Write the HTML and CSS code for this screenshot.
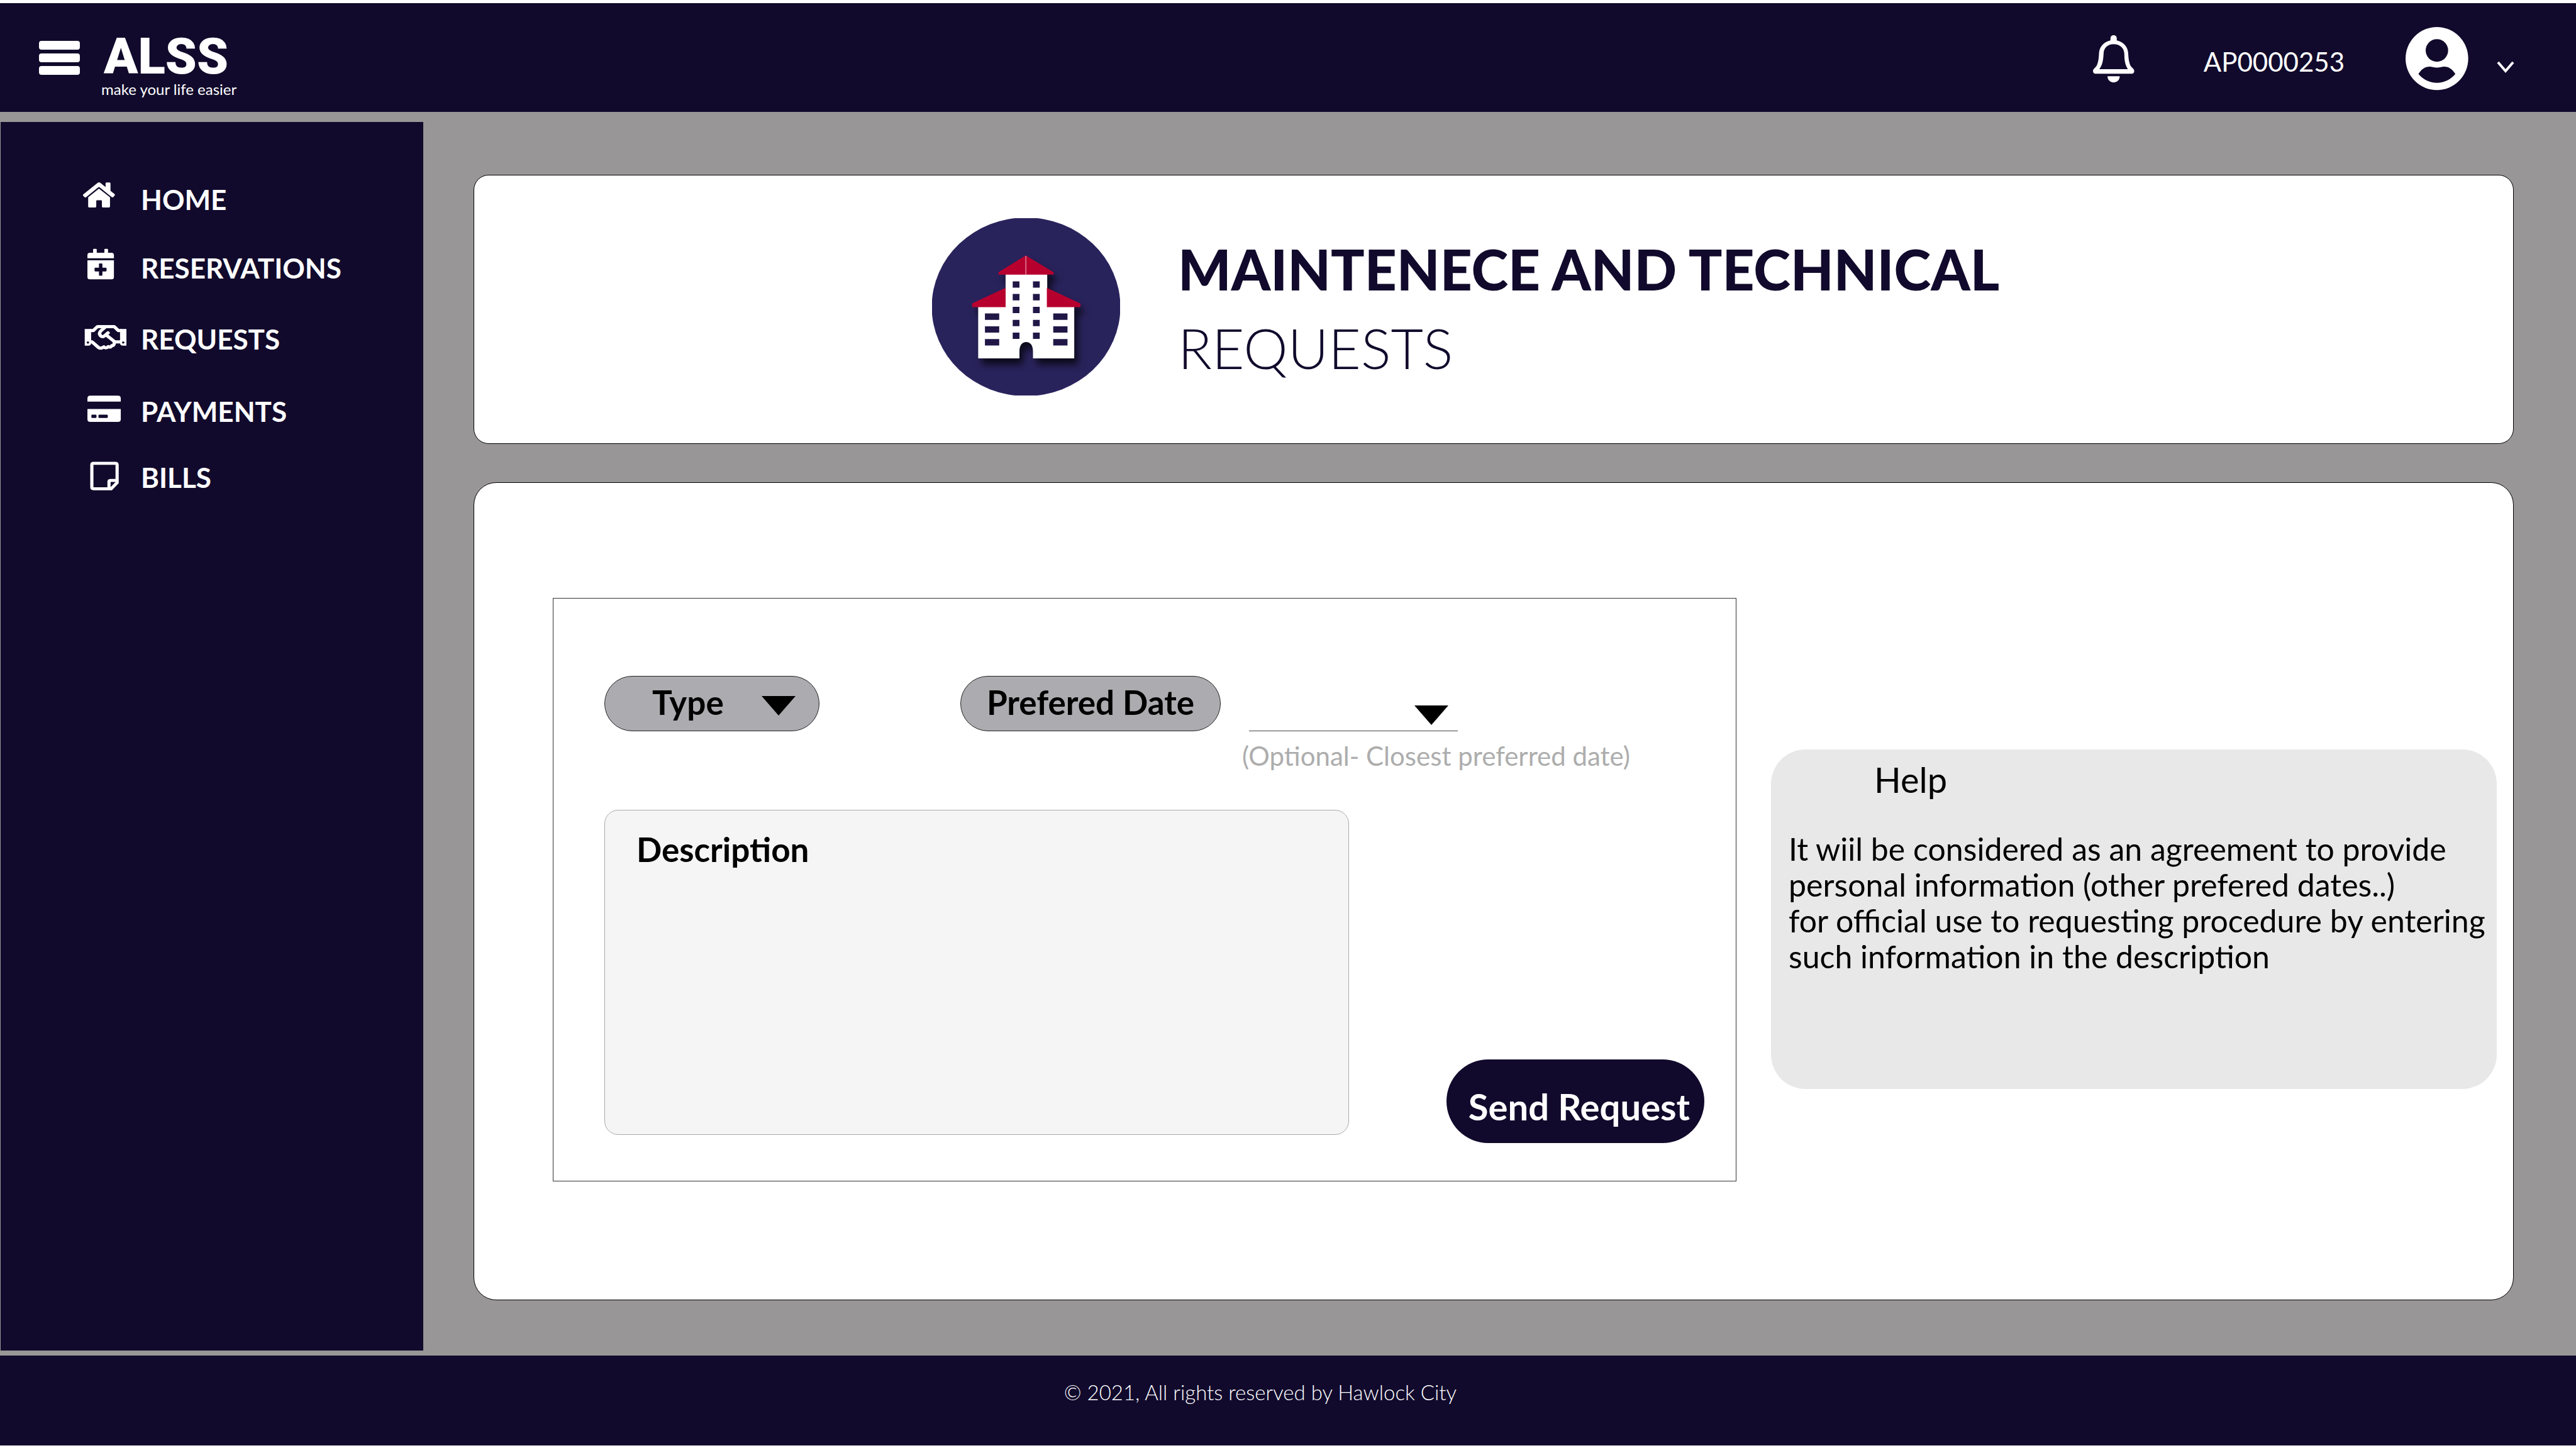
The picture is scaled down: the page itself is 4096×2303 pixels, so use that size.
FILE: index.html
```html
<!DOCTYPE html>
<html lang="en">
<head>
<meta charset="utf-8">
<meta name="viewport" content="width=device-width, initial-scale=1">
<title>ALSS - Maintenance and technical requests</title>
<link rel="stylesheet" href="styles.css">
</head>
<body>
<header class="topbar">
  <button class="icon-button" type="button" aria-label="Menu">
    <svg width="65" height="54" viewBox="0 0 65 54" fill="#fff"><rect width="65" height="14" rx="4"/><rect y="20" width="65" height="14" rx="4"/><rect y="40" width="65" height="14" rx="4"/></svg>
  </button>
  <a class="brand" href="#">
    <span class="brand-name">ALSS</span>
    <span class="brand-tagline">make your life easier</span>
  </a>
  <div class="account">
    <button class="icon-button bell" type="button" aria-label="Notifications">
      <svg width="66" height="76" viewBox="0 0 66 76"><g transform="scale(.5245 .2398) translate(-104 -236)" fill="#fff"><path fill-rule="evenodd" d="M157 270V255C157 243 161 236 166.500 236C172 236 176 243 176 255V270C198 282 211 315 211 365C212 410 216 437 222 450C226 458 229 464 229 474C229 484 226 491 223 491H110C107 491 104 484 104 474C104 464 107 458 111 450C117 437 121 410 122 365C122 315 135 282 157 270ZM123 461H210C203 440 199 410 199 362C199 320 185 295 166.500 295C148 295 136 320 136 362C135 410 131 440 123 461Z"/><path d="M148 508H185C185 532 177 549 166.500 549C156 549 148 532 148 508Z"/></g></svg>
    </button>
    <span class="account-id">AP0000253</span>
    <button class="icon-button profile" type="button" aria-label="Account menu">
      <svg width="100" height="101" viewBox="0 0 100 101"><g transform="scale(.5245 .2398) translate(-1053 -178)"><ellipse cx="1148" cy="387" rx="95" ry="209" fill="#fff"/><g class="cutout"><ellipse cx="1148" cy="333" rx="34" ry="75"/><path d="M1092 490C1100 460 1112 441 1125 441C1134 441 1138 447 1148 447C1158 447 1162 441 1171 441C1184 441 1196 460 1204 490C1190 526 1170 548 1148 548C1126 548 1106 526 1092 490Z"/></g></g></svg>
      <svg class="chevron" width="28" height="19" viewBox="0 0 28 19" fill="none" stroke="#fff" stroke-width="4"><path d="M2 2L14 16L26 2"/></svg>
    </button>
  </div>
</header>

<div class="workspace">
  <nav class="sidebar" aria-label="Main">
    <ul class="menu">
      <li><a href="#"><svg width="70" height="60" viewBox="0 0 70 60"><g transform="scale(.39 .358) translate(-154 -99)" fill="#fff"><path d="M154 162L213 110Q219 105 225 110L246 128V112Q246 108 250 108H262Q266 108 266 112V145L283 160Q285 163 283 166L278 172Q275 176 271 173L222 130Q219 127 216 130L167 173Q163 176 160 173L154 166Z"/><path d="M175 174L219 135L264 174V215Q264 219 260 219H235Q231 219 231 215V190Q231 187 228 187H211Q208 187 208 190V215Q208 219 204 219H179Q175 219 175 215Z"/></g></svg>HOME</a></li>
      <li><a href="#"><svg width="70" height="60" viewBox="0 0 70 60"><g transform="scale(.39 .358) translate(-154 -403)" fill="#fff"><path d="M172 444V430Q172 420 182 420H195V406Q195 402 199 402H206Q210 402 210 406V420H241V406Q241 402 245 402H252Q256 402 256 406V420H270Q280 420 280 430V444Z"/><path fill-rule="evenodd" d="M172 453H280V528Q280 538 270 538H182Q172 538 172 528ZM222 467Q219 467 219 471V486H204Q201 486 201 490V499Q201 503 204 503H219V518Q219 522 222 522H230Q233 522 233 518V503H247Q250 503 250 499V490Q250 486 247 486H233V471Q233 467 230 467Z"/></g></svg>RESERVATIONS</a></li>
      <li><a href="#"><svg width="70" height="60" viewBox="0 0 70 60"><g transform="scale(.39 .358) translate(-154 -718)"><path fill="#fff" fill-rule="evenodd" d="M161 758H187V820Q187 832 175 832H161ZM174 813A5 5 0 1 0 174 823A5 5 0 1 0 174 813ZM331 758H305V820Q305 832 317 832H331ZM318 813A5 5 0 1 0 318 823A5 5 0 1 0 318 813Z"/><g fill="none" stroke="#fff" stroke-width="14" stroke-linejoin="round"><path d="M180 765H196L213 747H281L298 765H312"/><path d="M183 815H191L217 840Q227 847 239 837Q246 847 257 836Q268 842 271 832Q282 833 282 815H310"/><path stroke-linecap="round" d="M246 748L226 767Q218 777 224 786Q233 797 242 788L256 775"/><path d="M247 783L285 816"/></g></g></svg>REQUESTS</a></li>
      <li><a href="#"><svg width="70" height="60" viewBox="0 0 70 60"><g transform="scale(.39 .358) translate(-154 -1040)" fill="#fff"><path d="M172 1081V1067Q172 1055 184 1055H296Q308 1055 308 1067V1081Z"/><path fill-rule="evenodd" d="M172 1114H308V1160Q308 1171 297 1171H183Q172 1171 172 1160ZM192 1139Q188 1139 188 1143V1150Q188 1154 192 1154H205Q209 1154 209 1150V1143Q209 1139 205 1139ZM221 1139Q217 1139 217 1143V1150Q217 1154 221 1154H251Q255 1154 255 1150V1143Q255 1139 251 1139Z"/></g></svg>PAYMENTS</a></li>
      <li><a href="#"><svg width="70" height="60" viewBox="0 0 70 60"><g transform="scale(.39 .358) translate(-154 -1333)" fill="none" stroke="#fff" stroke-width="13"><path d="M190 1362Q190 1355 197 1355H286Q293 1355 293 1362V1441L269 1468H197Q190 1468 190 1461Z"/><path d="M260 1466V1437Q260 1431 266 1431H293"/></g></svg>BILLS</a></li>
    </ul>
  </nav>

  <main class="content">
    <section class="card title-card">
      <svg class="emblem" width="299" height="282" viewBox="0 0 299 282">
        <ellipse cx="149.500" cy="141" rx="150" ry="142" fill="#29235c"/>
        <g class="building"><g transform="scale(.5966 .2398) translate(-72 -126)">
          <path fill="#fff" d="M268 498H379V714H451V1056H341V1010C341 970 334 948 323 948C312 948 305 970 305 1010V1056H195V714H268Z"/>
          <path fill="#b8002f" d="M322 373L396 485V500H249V485ZM268 588V716H180Q177 700 180 690ZM378 588V716H466Q470 700 466 690Z"/>
          <path stroke="#e9a3b4" stroke-width="2" d="M322 376V500"/>
          <path fill="#211747" d="M287 545h18v42h-18zM341 545h18v42h-18zM287 629h18v42h-18zM341 629h18v42h-18zM287 714h18v42h-18zM341 714h18v42h-18zM287 800h18v42h-18zM341 800h18v42h-18zM287 885h18v42h-18zM341 885h18v42h-18zM213 758h38v42h-38zM395 758h38v42h-38zM213 843h38v42h-38zM395 843h38v42h-38zM213 928h38v42h-38zM395 928h38v42h-38z"/>
        </g></g>
      </svg>
      <h1 class="page-title"><strong>MAINTENECE AND TECHNICAL</strong> <span>REQUESTS</span></h1>
    </section>

    <section class="card request-card">
      <form class="request-form">
        <div class="fields">
          <div class="picker type-picker">
            <select class="pill" aria-label="Type"><option>Type</option></select>
            <svg class="arrow" width="54" height="31" viewBox="0 0 54 31"><path d="M0 0H54L27 31Z"/></svg>
          </div>
          <label class="pill date-label" for="date">Prefered Date</label>
          <div class="date-field">
            <div class="picker date-picker">
              <select id="date" aria-describedby="date-hint"><option></option></select>
              <svg class="arrow" width="54" height="31" viewBox="0 0 54 31"><path d="M0 0H54L27 31Z"/></svg>
            </div>
            <p class="hint" id="date-hint">(Optional- Closest preferred date)</p>
          </div>
        </div>
        <div class="message">
          <textarea class="description" aria-label="Description" placeholder="Description"></textarea>
          <button class="send" type="submit">Send Request</button>
        </div>
      </form>
      <aside class="help">
        <h2>Help</h2>
        <p>It wiil be considered as an agreement to provide<br>personal information (other prefered dates..)<br>for official use to requesting procedure by entering<br>such information in the description</p>
      </aside>
    </section>
  </main>
</div>

<footer class="footer">© 2021, All rights reserved by Hawlock City</footer>
</body>
</html>
```
FILE: styles.css
```css
:root {
  --navy: #110a2c;
  --grey: #989696;
}

* {
  box-sizing: border-box;
}

body {
  margin: 0;
  padding: 5px 0 4px;
  min-height: 100vh;
  display: flex;
  flex-direction: column;
  background: #fff;
  color: #000;
  font-family: Lato, "Open Sans", sans-serif;
  font-size: 42px;
}

h1, h2, p, ul {
  margin: 0;
  padding: 0;
}

svg {
  display: block;
  flex: none;
  overflow: visible;
}

a {
  color: inherit;
  text-decoration: none;
}

button, select, textarea {
  font: inherit;
  color: inherit;
}

/* Top bar */
.topbar {
  display: flex;
  align-items: center;
  height: 173px;
  padding: 0 98px 0 62px;
  background: var(--navy);
  color: #fff;
}

.icon-button {
  display: flex;
  align-items: center;
  padding: 0;
  border: 0;
  background: none;
}

.brand {
  display: flex;
  flex-direction: column;
  margin: 26px 0 0 34px;
}

.brand-name {
  padding-left: 4px;
  font-family: Roboto, sans-serif;
  font-weight: 900;
  font-size: 80px;
  line-height: 74px;
}

.brand-tagline {
  font-size: 24px;
  line-height: 30px;
}

.account {
  display: flex;
  align-items: center;
  margin: 4px 0 0 auto;
}

.account-id {
  margin: 8px 97px 0 110px;
}

.profile {
  gap: 45px;
}

.chevron {
  margin-top: 26px;
}

.cutout {
  fill: var(--navy);
}

/* Sidebar and content */
.workspace {
  flex: 1;
  display: flex;
  padding: 16px 0 8px 1px;
  background: var(--grey);
}

.sidebar {
  flex: none;
  width: 672px;
  padding: 93px 0 0 131px;
  background: var(--navy);
  color: #fff;
}

.menu {
  display: grid;
  grid-template-rows: 109px 113px 115px 105px 60px;
  list-style: none;
}

.menu a {
  display: flex;
  gap: 22px;
  font-weight: 700;
  font-size: 44px;
  line-height: 60px;
}

.content {
  flex: 1;
  display: flex;
  flex-direction: column;
  gap: 61px;
  padding: 84px 99px 80px 80px;
}

.card {
  border: 1px solid #000;
  background: #fff;
}

.title-card {
  display: flex;
  align-items: center;
  gap: 92px;
  min-height: 428px;
  padding: 0 0 8px 728px;
  border-radius: 24px;
}

.emblem {
  overflow: hidden;
}

.building {
  filter: drop-shadow(6px 10px 6px rgba(0, 0, 0, .7));
}

.page-title {
  margin-top: 4px;
  color: var(--navy);
  font-size: 89px;
  line-height: 125px;
}

.page-title strong,
.page-title span {
  display: block;
}

.page-title span {
  font-weight: 300;
}

.request-card {
  flex: 1;
  display: grid;
  grid-template-columns: minmax(0, 1882fr) minmax(0, 1154fr);
  align-items: start;
  gap: 55px;
  padding: 183px 26px 60px 125px;
  border-radius: 36px;
}

/* Request form */
.request-form {
  display: flex;
  flex-direction: column;
  gap: 61px;
  padding: 123px 50px 60px 81px;
  border: 1px solid #333;
}

.fields {
  display: flex;
  align-items: flex-start;
}

.pill {
  height: 88px;
  border: 1px solid #222;
  border-radius: 44px;
  background: #acabaf;
  font-weight: 700;
  font-size: 53px;
  line-height: 82px;
  padding: 0 0 4px;
}

.picker {
  display: grid;
  align-items: center;
}

.picker select {
  grid-area: 1 / 1;
  width: 100%;
  appearance: none;
}

.arrow {
  grid-area: 1 / 1;
  justify-self: end;
  pointer-events: none;
}

.type-picker {
  width: 342px;
  margin-right: 224px;
}

.type-picker select {
  padding-left: 75px;
}

.type-picker .arrow {
  margin: 6px 38px 0 0;
}

.date-label {
  width: 414px;
  text-align: center;
}

.date-field {
  margin-left: 34px;
}

.date-picker {
  width: 332px;
  margin-left: 11px;
}

.date-picker select {
  height: 88px;
  border: 0;
  border-bottom: 1px solid #444;
  background: none;
}

.date-picker .arrow {
  margin: 36px 15px 0 0;
}

.hint {
  margin-top: 14px;
  color: #adadad;
  line-height: 50px;
}

.message {
  display: flex;
  align-items: flex-start;
  gap: 155px;
}

.description {
  flex: 1;
  height: 517px;
  padding: 32px 50px;
  border: 1px solid #aaa;
  border-radius: 22px;
  background: #f5f5f5;
  font-weight: 700;
  font-size: 53px;
  line-height: 60px;
  resize: none;
}

.description::placeholder {
  color: #000;
  opacity: 1;
}

.send {
  width: 410px;
  height: 133px;
  margin-top: 397px;
  padding: 16px 0 0 12px;
  border: 0;
  border-radius: 67px;
  background: var(--navy);
  color: #fff;
  font-weight: 700;
  font-size: 58px;
  white-space: nowrap;
}

/* Help panel */
.help {
  min-height: 540px;
  margin-top: 241px;
  padding: 16px 0 0 28px;
  border-radius: 55px;
  background: #e8e8e8;
  white-space: nowrap;
}

.help h2 {
  padding-left: 136px;
  font-weight: 400;
  font-size: 56px;
  line-height: 64px;
}

.help p {
  margin-top: 50px;
  font-size: 50px;
  line-height: 57px;
}

/* Footer */
.footer {
  height: 143px;
  padding: 34px 88px 0 0;
  background: var(--navy);
  color: #fff;
  font-weight: 300;
  font-size: 33px;
  line-height: 48px;
  text-align: center;
}
```
